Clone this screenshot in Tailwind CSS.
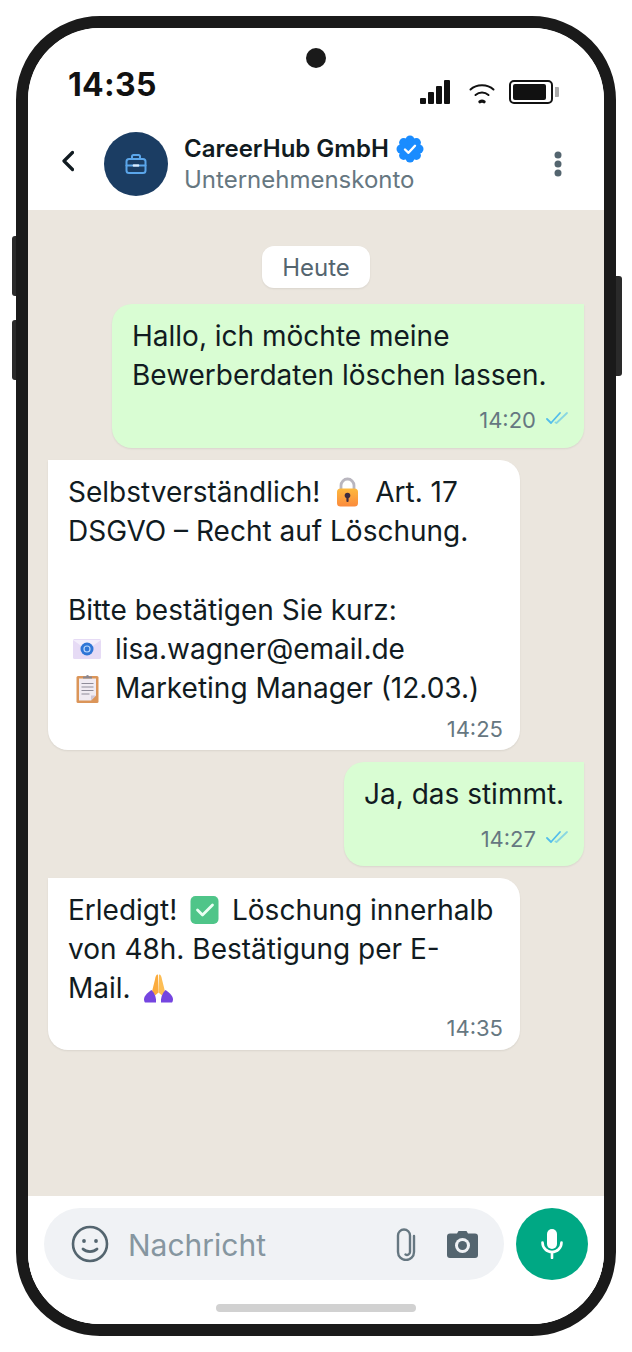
<!DOCTYPE html>
<html lang="de">
<head>
  <meta charset="UTF-8" />
  <meta name="viewport" content="width=device-width, initial-scale=1" />
  <title>CareerHub GmbH - Chat</title>
  <script src="https://cdn.jsdelivr.net/npm/@tailwindcss/browser@4"></script>
</head>
<body class="bg-white font-['Inter',sans-serif] text-[#111b21]">
  <div class="relative ml-4 mt-4 h-[1320px] w-[600px] rounded-[84px] border-12 border-[#1a1a1a]">
    <!-- side buttons -->
    <div class="absolute -left-[16px] top-[208px] h-[60px] w-[4px] rounded-l-[3px] bg-[#2a2a2a]"></div>
    <div class="absolute -left-[16px] top-[292px] h-[60px] w-[4px] rounded-l-[3px] bg-[#2a2a2a]"></div>
    <div class="absolute -right-[18px] top-[248px] h-[100px] w-[6px] rounded-r-[3px] bg-[#2a2a2a]"></div>

    <div class="flex h-full w-full flex-col overflow-hidden rounded-[72px] bg-white">
      <!-- camera -->
      <div class="absolute left-[278px] top-[20px] h-[20px] w-[20px] rounded-full bg-[#1a1a1a]"></div>

      <!-- status bar -->
      <div class="flex h-[90px] shrink-0 items-start pl-[40px] pr-[45px] pt-[40px]">
        <span class="text-[32px] font-bold leading-[34px] tracking-[0.3px] text-[#111111]">14:35</span>
        <div class="ml-auto mt-[12px] flex items-start">
          <svg class="h-[24px] w-[30px]" viewBox="0 0 30 24" fill="#111111">
            <rect x="0" y="18" width="6" height="6" rx="1"/>
            <rect x="8" y="12" width="6" height="12" rx="1"/>
            <rect x="16" y="6" width="6" height="18" rx="1"/>
            <rect x="24" y="0" width="6" height="24" rx="1"/>
          </svg>
          <svg class="ml-[19px] mt-[3px] h-[21px] w-[26px]" viewBox="0 0 26 21" fill="none" stroke="#111111" stroke-width="2" stroke-linecap="round">
            <path d="M1.500 6.500C7.500 .8 18.500 .8 24.500 6.500"/>
            <path d="M6.500 12C10.300 8.800 15.700 8.800 19.500 12"/>
            <path d="M11 18.800c1.200-.9 2.800-.9 4 0" stroke-width="3.200"/>
          </svg>
          <div class="ml-[14px] flex items-center">
            <div class="flex h-[24px] w-[44px] items-center rounded-[5px] border-2 border-[#111111] pl-[2px]">
              <div class="h-[16px] w-[33px] rounded-[2px] bg-[#111111]"></div>
            </div>
            <div class="ml-[2px] h-[10px] w-[4px] rounded-r-[1px] bg-[#aaaaaa]"></div>
          </div>
        </div>
      </div>

      <!-- chat header -->
      <div class="flex h-[92px] shrink-0 items-start pl-[34px] pr-[42px] pt-[14px]">
        <svg class="mt-[18px] h-[22px] w-[12px]" viewBox="0 0 12 22" fill="none" stroke="#111b21" stroke-width="3.200" stroke-linecap="round" stroke-linejoin="round">
          <path d="M10.500 2.500L2 11l8.500 8.500"/>
        </svg>
        <div class="ml-[30px] flex h-[64px] w-[64px] shrink-0 items-center justify-center rounded-full bg-[#1b3d63]">
          <svg class="h-[24px] w-[24px]" viewBox="0 0 24 24" fill="none" stroke="#5ba6ea" stroke-width="2" stroke-linecap="round" stroke-linejoin="round">
            <rect x="2.500" y="7" width="19" height="14" rx="2.500"/>
            <path d="M8 7V4.500A1.500 1.500 0 0 1 9.500 3h5A1.500 1.500 0 0 1 16 4.500V7"/>
            <path d="M2.500 13.500h7M14.500 13.500h7"/>
            <path d="M10 13.500h4" stroke="#d8ecff" stroke-width="2.600"/>
          </svg>
        </div>
        <div class="ml-[16px] pt-[2px]">
          <div class="flex items-center text-[24px] font-semibold leading-[30px] text-[#111b21]">
            CareerHub GmbH
            <svg class="ml-[7px] h-[28px] w-[28px]" viewBox="0 0 28 28">
              <g fill="#1a8cff">
                <circle cx="14" cy="14" r="11"/>
                <circle cx="14" cy="5" r="4.500"/><circle cx="14" cy="23" r="4.500"/>
                <circle cx="5" cy="14" r="4.500"/><circle cx="23" cy="14" r="4.500"/>
                <circle cx="7.600" cy="7.600" r="4.500"/><circle cx="20.400" cy="7.600" r="4.500"/>
                <circle cx="7.600" cy="20.400" r="4.500"/><circle cx="20.400" cy="20.400" r="4.500"/>
              </g>
              <path d="M9 14.500l3.500 3.300 6.500-7" fill="none" stroke="#ffffff" stroke-width="2.400" stroke-linecap="round" stroke-linejoin="round"/>
            </svg>
          </div>
          <div class="text-[24px] leading-[32px] text-[#667781]">Unternehmenskonto</div>
        </div>
        <svg class="ml-auto mt-[19px] h-[26px] w-[8px]" viewBox="0 0 8 26" fill="#54656f">
          <circle cx="4" cy="4" r="3.500"/><circle cx="4" cy="13" r="3.500"/><circle cx="4" cy="22" r="3.500"/>
        </svg>
      </div>

      <!-- messages -->
      <div class="flex min-h-0 flex-1 flex-col bg-[#ebe6de] px-[20px] pt-[36px] text-[28px] leading-[39.2px]">
        <div class="self-center rounded-[12px] bg-white px-[20px] pt-[1px] text-[24px] leading-[41px] text-[#54656f] shadow-[0_1px_2px_rgba(0,0,0,0.08)]">Heute</div>

        <div class="mt-[16px] w-[472px] self-end rounded-[20px] rounded-tr-none bg-[#d9fdd3] pl-[20px] pr-[16px] pt-[13px] shadow-[0_1px_2px_rgba(0,0,0,0.08)]">
          Hallo, ich möchte meine<br>Bewerberdaten löschen lassen.
          <div class="flex h-[52.6px] items-center justify-end pb-[3px] text-[22px] leading-[28px] text-[#667781]">
            14:20
            <svg class="ml-[10px] -mt-[4px] h-[16px] w-[22px]" viewBox="0 0 22 16" fill="none" stroke="#53bdeb" stroke-width="1.800" stroke-linecap="round" stroke-linejoin="round">
              <path d="M1 9l4 4 9-10"/><path d="M9.500 12.500l1 .5L21 3" stroke-opacity="0.600"/>
            </svg>
          </div>
        </div>

        <div class="mt-[12px] w-[472px] rounded-[20px] rounded-tl-none bg-white pl-[20px] pr-[17px] pt-[13px] shadow-[0_1px_2px_rgba(0,0,0,0.08)]">
          Selbstverständlich!
          <svg class="inline h-[30px] w-[39px] align-[-5px]" viewBox="0.5 0 39 30">
            <defs><linearGradient id="lockBody" x1="0" y1="0" x2="0" y2="1"><stop offset="0" stop-color="#fdb93e"/><stop offset="1" stop-color="#fb8a3c"/></linearGradient></defs>
            <path d="M13.500 13V8.500a6.500 6.500 0 0 1 13 0V13" fill="none" stroke="#b9b6bf" stroke-width="2.800"/>
            <rect x="9.500" y="11.500" width="21" height="18" rx="3.500" fill="url(#lockBody)"/>
            <circle cx="20" cy="18.500" r="2.800" fill="#3d2b3f"/><rect x="18.900" y="19" width="2.200" height="6" rx="1" fill="#3d2b3f"/>
          </svg>
          Art. 17<br>DSGVO – Recht auf Löschung.<br><br>Bitte bestätigen Sie kurz:<br>
          <svg class="inline h-[30px] w-[39px] align-[-5px]" viewBox="0.5 0 39 30">
            <rect x="5.500" y="5" width="28" height="20" rx="1.500" fill="#e6dbf5"/>
            <path d="M5.500 6l14 10 14-10" fill="#f3eefb"/>
            <circle cx="19.500" cy="15" r="6.500" fill="#2f76d6"/>
            <circle cx="19.500" cy="15" r="3" fill="none" stroke="#b8d6fb" stroke-width="1.200"/>
          </svg>
          lisa.wagner@email.de<br>
          <svg class="inline h-[30px] w-[39px] align-[-5px]" viewBox="0.5 0 39 30">
            <rect x="9" y="3" width="22" height="27" rx="1.500" fill="#db9559"/>
            <path d="M11.500 5.500h17v17l-5 5h-12z" fill="#f0ebf2"/>
            <path d="M28.500 22.500l-5 5v-5z" fill="#cfc6d6"/>
            <path d="M15.500 5.500V3.500h3a1.500 1.500 0 0 1 3 0h3v2z" fill="#8a8791"/>
            <path d="M14 10.500h12M14 14h12M14 17.500h12M14 21h8" stroke="#8f8c99" stroke-width="1"/>
          </svg>
          Marketing Manager (12.03.)
          <div class="flex h-[41.8px] items-center justify-end pb-[1px] text-[22px] leading-[28px] text-[#667781]">14:25</div>
        </div>

        <div class="mt-[12px] w-[240px] self-end rounded-[20px] rounded-tr-none bg-[#d9fdd3] pl-[20px] pr-[16px] pt-[13px] shadow-[0_1px_2px_rgba(0,0,0,0.08)]">
          Ja, das stimmt.
          <div class="flex h-[51.8px] items-center justify-end pb-[3px] text-[22px] leading-[28px] text-[#667781]">
            14:27
            <svg class="ml-[10px] -mt-[4px] h-[16px] w-[22px]" viewBox="0 0 22 16" fill="none" stroke="#53bdeb" stroke-width="1.800" stroke-linecap="round" stroke-linejoin="round">
              <path d="M1 9l4 4 9-10"/><path d="M9.500 12.500l1 .5L21 3" stroke-opacity="0.600"/>
            </svg>
          </div>
        </div>

        <div class="mt-[12px] w-[472px] rounded-[20px] rounded-tl-none bg-white pl-[20px] pr-[17px] pt-[13px] shadow-[0_1px_2px_rgba(0,0,0,0.08)]">
          Erledigt!
          <svg class="inline h-[30px] w-[39px] align-[-5px]" viewBox="0.5 0 39 30">
            <rect x="6" y="1" width="28" height="28" rx="5" fill="#4fc589"/>
            <path d="M13 15l5 5 10-10" fill="none" stroke="#eafff3" stroke-width="2.800" stroke-linecap="round" stroke-linejoin="round"/>
          </svg>
          Löschung innerhalb<br>von 48h. Bestätigung per E-<br>Mail.
          <svg class="inline h-[30px] w-[39px] align-[-5px]" viewBox="0.5 0 39 30">
            <path d="M19.500 1.500c-2 0-2.500 2-3 5l-3 12 3 4 3.500-3z" fill="#fbab3d"/>
            <path d="M20.500 1.500c2 0 2.500 2 3 5l3 12-3 4-3.500-3z" fill="#fdbe55"/>
            <path d="M13 17c-3 2-7 5-7.500 9 0 1.500.5 3 1 3.500h11c.5-4-1-9-4.500-12.500z" fill="#7545e0"/>
            <path d="M27 17c3 2 7 5 7.500 9 0 1.500-.5 3-1 3.500h-11c-.5-4 1-9 4.500-12.500z" fill="#7545e0"/>
          </svg>
          <div class="flex h-[41.4px] items-center justify-end pb-[2px] text-[22px] leading-[28px] text-[#667781]">14:35</div>
        </div>
      </div>

      <!-- input bar -->
      <div class="relative h-[128px] shrink-0 bg-white px-[16px] pt-[12px]">
        <div class="flex items-start">
          <div class="flex h-[72px] w-[460px] items-center rounded-full bg-[#f0f2f5] pl-[27px] pr-[26px]">
            <svg class="h-[38px] w-[38px]" viewBox="0 0 38 38" fill="none" stroke="#54656f" stroke-width="2.600" stroke-linecap="round">
              <circle cx="19" cy="19" r="17"/>
              <circle cx="13" cy="16" r="1.900" fill="#54656f" stroke="none"/>
              <circle cx="25" cy="16" r="1.900" fill="#54656f" stroke="none"/>
              <path d="M12 24c3.500 3.400 10.500 3.400 14 0" stroke-width="2.800"/>
            </svg>
            <span class="ml-[19px] pt-[2px] text-[30px] leading-[40px] text-[#8696a0]">Nachricht</span>
            <svg class="ml-auto h-[34px] w-[20px]" viewBox="0 0 20 34" fill="none" stroke="#667781" stroke-width="2.400" stroke-linecap="round" stroke-linejoin="round">
              <path d="M18 9v16a8 8 0 0 1-16 0V8.500a6 6 0 0 1 12 0V25a3 3 0 0 1-4.500 2.500"/>
            </svg>
            <svg class="ml-[31px] h-[28px] w-[31px]" viewBox="0 0 31 28">
              <path d="M10 3.500L11.500 1h8L21 3.500h7a3 3 0 0 1 3 3V25a3 3 0 0 1-3 3H3a3 3 0 0 1-3-3V6.500a3 3 0 0 1 3-3z" fill="#54656f"/>
              <circle cx="15.500" cy="15.500" r="7.500" fill="#f0f2f5"/>
              <circle cx="15.500" cy="15.500" r="4.500" fill="#54656f"/>
            </svg>
          </div>
          <div class="ml-[12px] flex h-[72px] w-[72px] items-center justify-center rounded-full bg-[#00a884]">
            <svg class="h-[30px] w-[22px]" viewBox="0 0 22 30" fill="none" stroke="#ffffff" stroke-width="2.600" stroke-linecap="round">
              <rect x="6" y="0" width="10" height="20" rx="5" fill="#ffffff" stroke="none"/>
              <path d="M1.500 13.500a9.500 9.500 0 0 0 19 0"/>
              <path d="M11 23v6"/>
            </svg>
          </div>
        </div>
        <div class="absolute bottom-[12px] left-[188px] h-[8px] w-[200px] rounded-full bg-[#d1d1d1]"></div>
      </div>
    </div>
  </div>
</body>
</html>
